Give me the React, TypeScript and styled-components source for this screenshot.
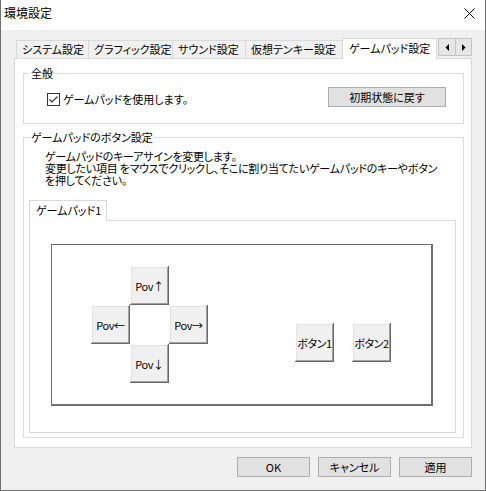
import React from "react";
import styled, { createGlobalStyle } from "styled-components";

const GlobalStyle = createGlobalStyle`
  html, body {
    margin: 0;
    padding: 0;
    background: #fff;
    overflow: hidden;
  }
  body {
    font-family: "Noto Sans CJK JP", "Liberation Sans", sans-serif;
    font-size: 11px;
    color: #000;
    font-feature-settings: "palt";
  }
  * {
    box-sizing: border-box;
  }
`;

const Window = styled.div`
  width: 486px;
  height: 491px;
  display: flex;
  flex-direction: column;
  background: #f0f0f0;
  border: 1px solid #707070;
  border-top: none;
`;

const TitleBar = styled.div`
  flex: none;
  height: 30px;
  background: #fff;
  display: flex;
  align-items: center;
  justify-content: space-between;
  padding: 0 10px 4px 3px;
  font-size: 12px;
  line-height: 12px;
`;

const Body = styled.div`
  flex: 1;
  display: flex;
  flex-direction: column;
  padding: 8px 13px 13px 13px;
`;

const TabStrip = styled.div`
  flex: none;
  height: 20px;
  display: flex;
  align-items: flex-end;
  padding-left: 2px;
`;

const Tab = styled.div<{ $width: number; $active?: boolean }>`
  width: ${(p) => p.$width}px;
  height: ${(p) => (p.$active ? 21 : 18)}px;
  margin-bottom: ${(p) => (p.$active ? -1 : 0)}px;
  position: relative;
  z-index: ${(p) => (p.$active ? 1 : 0)};
  display: flex;
  align-items: center;
  padding: 0 0 ${(p) => (p.$active ? 2 : 1)}px ${(p) => (p.$active ? 6 : 5)}px;
  white-space: nowrap;
  overflow: hidden;
  background: ${(p) => (p.$active ? "#fff" : "#f0f0f0")};
  border: 1px solid #d9d9d9;
  border-bottom: none;
  border-right: ${(p) => (p.$active ? "1px solid #d9d9d9" : "none")};
  line-height: 12px;
`;

const Scroller = styled.div`
  margin-left: auto;
  align-self: flex-start;
  display: flex;
  border: 1px solid #c4c4c4;
  background: #e6e6e6;
`;

const ScrollButton = styled.div`
  width: 16px;
  height: 16px;
  display: flex;
  align-items: center;
  justify-content: center;
  & + & {
    border-left: 1px solid #c4c4c4;
  }
`;

const Panel = styled.div`
  flex: 1;
  display: flex;
  flex-direction: column;
  gap: 7px;
  background: #fff;
  border: 1px solid #d9d9d9;
  padding: 8px 7px 9px 8px;
`;

const Group = styled.fieldset<{ $grow?: boolean }>`
  margin: 0;
  min-width: 0;
  border: 1px solid #dcdcdc;
  padding: 0;
  flex: ${(p) => (p.$grow ? 1 : "none")};
  display: flex;
  flex-direction: column;
`;

const GroupBody = styled.div<{ $pad: string }>`
  flex: 1;
  display: flex;
  flex-direction: column;
  padding: ${(p) => p.$pad};
`;

const Legend = styled.legend`
  padding: 0 1px;
  margin-left: 6px;
  line-height: 12px;
  font-size: 11px;
`;

const GeneralRow = styled.div`
  display: flex;
  align-items: flex-end;
  justify-content: space-between;
`;

const CheckLabel = styled.label`
  display: flex;
  align-items: center;
  gap: 3px;
  margin-bottom: 1px;
  line-height: 13px;
`;

const CheckBox = styled.span`
  width: 13px;
  height: 13px;
  border: 1px solid #333;
  background: #fff;
  display: flex;
  align-items: center;
  justify-content: center;
`;

const PushButton = styled.button<{ $width: number }>`
  width: ${(p) => p.$width}px;
  height: 20px;
  padding: 0;
  margin: 0;
  background: #e1e1e1;
  border: 1px solid #adadad;
  font: inherit;
  font-feature-settings: "palt";
  line-height: 12px;
  color: #000;
`;

const Description = styled.div`
  margin-left: 16px;
  line-height: 12px;
  letter-spacing: -0.25px;
  white-space: nowrap;
`;

const InnerTabs = styled.div`
  flex: 1;
  display: flex;
  flex-direction: column;
  margin-top: 14px;
`;

const InnerTabStrip = styled.div`
  flex: none;
  height: 20px;
  display: flex;
  align-items: flex-end;
`;

const InnerPanel = styled.div`
  flex: 1;
  background: #fff;
  border: 1px solid #d9d9d9;
  padding: 23px 0 0 21px;
`;

const PadBox = styled.div`
  width: 382px;
  height: 162px;
  background: #fff;
  border: 1px solid #6e6e6e;
  border-right-width: 2px;
  border-bottom-width: 2px;
  display: flex;
  align-items: flex-start;
  padding-left: 39px;
`;

const DPad = styled.div`
  margin-top: 21px;
  display: grid;
  grid-template-columns: repeat(3, 39px);
  grid-template-rows: repeat(3, 39px);
`;

const ButtonPair = styled.div`
  margin: 78px 0 0 87px;
  display: flex;
  gap: 18px;
`;

const PadButton = styled.div<{ $col?: number; $row?: number }>`
  width: 39px;
  height: 39px;
  grid-column: ${(p) => p.$col ?? "auto"};
  grid-row: ${(p) => p.$row ?? "auto"};
  display: flex;
  align-items: center;
  justify-content: center;
  background: #f0f0f0;
  box-shadow: inset -1px -1px #696969, inset 1px 1px #fff, inset -2px -2px #a0a0a0,
    inset 2px 2px #e3e3e3;
  font-size: 11px;
  letter-spacing: -0.4px;
  white-space: nowrap;
`;

const Footer = styled.div`
  flex: none;
  margin-top: 9px;
  display: flex;
  justify-content: flex-end;
  gap: 8px;
`;

const tabs = [
  { label: "システム設定", width: 72 },
  { label: "グラフィック設定", width: 84 },
  { label: "サウンド設定", width: 73 },
  { label: "仮想テンキー設定", width: 97 },
  { label: "ゲームパッド設定", width: 95, active: true },
];

const Arrow = ({ dir }: { dir: "left" | "right" }) => (
  <svg width="4" height="7" viewBox="0 0 4 7">
    {dir === "left" ? (
      <polygon points="4,0 4,7 0.5,3.5" fill="#000" />
    ) : (
      <polygon points="0,0 0,7 3.5,3.5" fill="#000" />
    )}
  </svg>
);

export default function App() {
  return (
    <>
      <GlobalStyle />
      <Window>
        <TitleBar>
          <span>環境設定</span>
          <svg width="11" height="11" viewBox="0 0 11 11">
            <path d="M0.5 0.5 L10.5 10.5 M10.5 0.5 L0.5 10.5" stroke="#000" strokeWidth="1" />
          </svg>
        </TitleBar>
        <Body>
          <TabStrip>
            {tabs.map((t) => (
              <Tab key={t.label} $width={t.width} $active={t.active}>
                {t.label}
              </Tab>
            ))}
            <Scroller>
              <ScrollButton>
                <Arrow dir="left" />
              </ScrollButton>
              <ScrollButton>
                <Arrow dir="right" />
              </ScrollButton>
            </Scroller>
          </TabStrip>
          <Panel>
            <Group>
              <Legend>全般</Legend>
              <GroupBody $pad="8px 17px 16px 23px">
                <GeneralRow>
                  <CheckLabel>
                    <CheckBox>
                      <svg width="11" height="11" viewBox="0 0 11 11">
                        <polyline points="1.5,5.5 4,8 9.5,2.5" fill="none" stroke="#333" strokeWidth="1.2" />
                      </svg>
                    </CheckBox>
                    ゲームパッドを使用します。
                  </CheckLabel>
                  <PushButton $width={118}>初期状態に戻す</PushButton>
                </GeneralRow>
              </GroupBody>
            </Group>
            <Group $grow>
              <Legend>ゲームパッドのボタン設定</Legend>
              <GroupBody $pad="7px 7px 4px 5px">
                <Description>
                  ゲームパッドのキーアサインを変更します。
                  <br />
                  変更したい項目 をマウスでクリックし、そこに割り当てたいゲームパッドのキーやボタン
                  <br />
                  を押してください。
                </Description>
                <InnerTabs>
                  <InnerTabStrip>
                    <Tab $width={78} $active>
                      ゲームパッド1
                    </Tab>
                  </InnerTabStrip>
                  <InnerPanel>
                    <PadBox>
                      <DPad>
                        <PadButton $col={2} $row={1}>Pov↑</PadButton>
                        <PadButton $col={1} $row={2}>Pov←</PadButton>
                        <PadButton $col={3} $row={2}>Pov→</PadButton>
                        <PadButton $col={2} $row={3}>Pov↓</PadButton>
                      </DPad>
                      <ButtonPair>
                        <PadButton>ボタン1</PadButton>
                        <PadButton>ボタン2</PadButton>
                      </ButtonPair>
                    </PadBox>
                  </InnerPanel>
                </InnerTabs>
              </GroupBody>
            </Group>
          </Panel>
          <Footer>
            <PushButton $width={73}>OK</PushButton>
            <PushButton $width={73}>キャンセル</PushButton>
            <PushButton $width={73}>適用</PushButton>
          </Footer>
        </Body>
      </Window>
    </>
  );
}
